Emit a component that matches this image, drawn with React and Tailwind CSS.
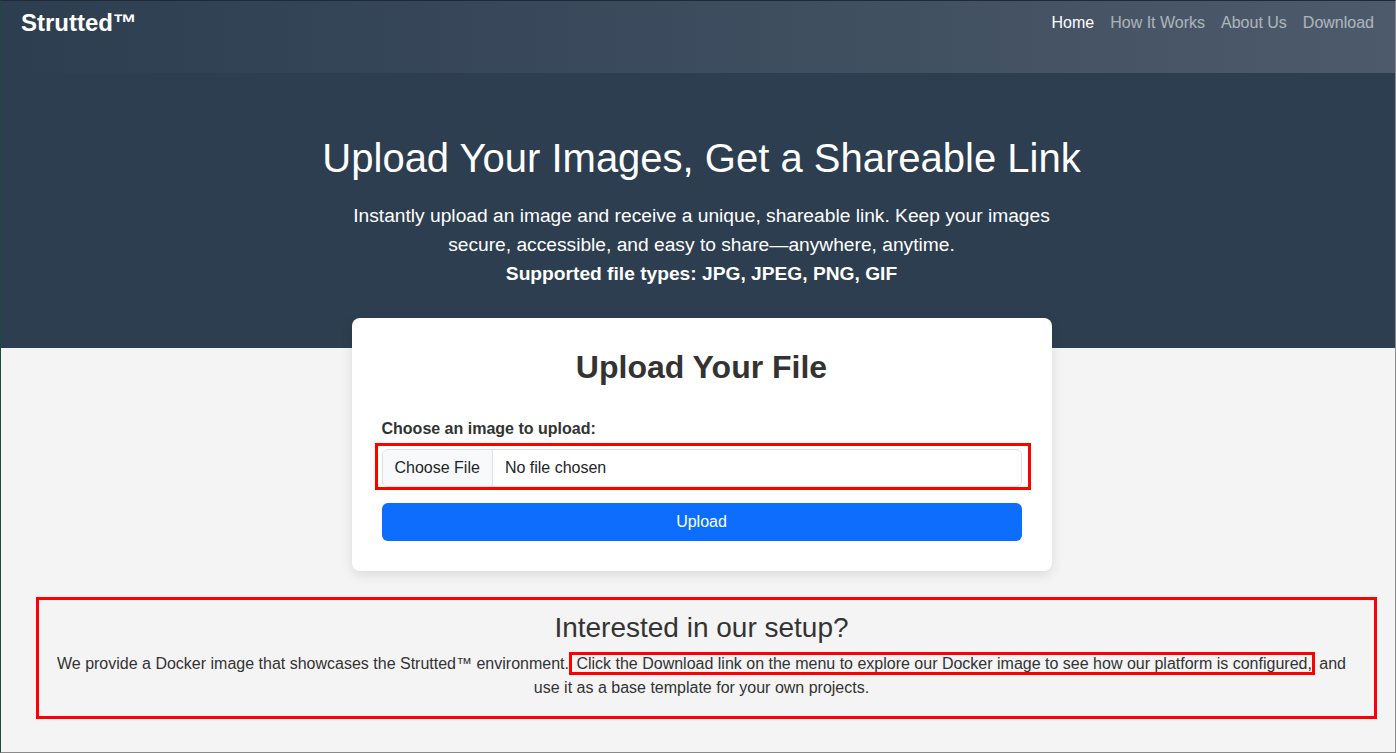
import React from "react";

const navLinks = [
    {label: "Home", active: true},
    {label: "How It Works"},
    {label: "About Us"},
    {label: "Download"},
];

const Header = () => {
    return (
        <header className="h-[72px] bg-gradient-to-r from-[#2c3e50] to-[#4d5a6b]">
            <nav className="flex items-start justify-between pl-[20px] pr-[13px] pt-[5px]">
                <a href="#" className="text-[24px] font-bold leading-[34px] text-white">Strutted™</a>
                <ul className="flex items-center pt-[5px]">
                    {navLinks.map((link) => (
                        <li key={link.label}>
                            <a href="#"
                               className={`block px-2 text-[16px] leading-[24px] ${link.active ? "text-white" : "text-white/55"}`}>
                                {link.label}
                            </a>
                        </li>
                    ))}
                </ul>
            </nav>
        </header>
    );
};

const UploadCard = () => {
    return (
        <div className="relative z-10 mx-auto -mt-[30px] w-[700px] rounded-lg bg-white p-[30px] shadow-[0_4px_12px_rgba(0,0,0,0.1)]">
            <h2 className="mb-[31px] text-center text-[32px] font-bold leading-[38px] text-[#333]">Upload Your File</h2>
            <label className="mb-[8px] block text-[16px] font-bold leading-[24px] text-[#333]">Choose an image to upload:</label>
            <div className="relative">
                <div className="flex h-[38px] overflow-hidden rounded-md border border-[#dee2e6] bg-white text-[16px] text-[#212529]">
                    <span className="flex items-center border-r border-[#dee2e6] bg-[#f8f9fa] px-3">Choose File</span>
                    <span className="flex items-center px-3">No file chosen</span>
                </div>
                {/* annotation outline */}
                <div className="pointer-events-none absolute -left-[7px] -top-[6px] h-[47px] w-[656px] border-[3px] border-[#ff0000]"></div>
            </div>
            <button type="button"
                    className="mt-[16px] h-[38px] w-full rounded-md bg-[#0d6efd] text-[16px] text-white">
                Upload
            </button>
        </div>
    );
};

const SetupInfo = () => {
    return (
        <section className="ml-[35px] mr-[18px] mt-[26px] border-[3px] border-[#ff0000] pb-0 pt-[11px]">
            <div className="ml-[12px] mr-[22px] text-center text-[#333]">
                <h3 className="mb-[7px] text-[28px] leading-[34px]">Interested in our setup?</h3>
                <p className="mb-[16px] text-[16px] leading-[24px]">
                    We provide a Docker image that showcases the Strutted™ environment.<span
                    className="border-[3px] border-[#ff0000]"> Click the Download link on the menu to explore our Docker image to see how our platform is configured,</span> and
                    use it as a base template for your own projects.
                </p>
            </div>
        </section>
    );
};

export default function App() {
    return (
        <div
            className="min-h-[753px] border-b border-l border-r border-t border-b-[#8a8a8a] border-l-[#1d4a3c] border-r-[#8a8a8a] border-t-[#1f2a36] bg-[#f4f4f4] font-['Liberation_Sans',Arial,sans-serif]">
            <Header/>
            <div className="bg-[#2c3e50] pb-[60px] pl-[7px] pt-[61px] text-center text-white">
                <h1 className="text-[40px] leading-[48px]">Upload Your Images, Get a Shareable Link</h1>
                <p className="mx-auto mt-[19px] max-w-[720px] text-[19.2px] leading-[29px]">
                    Instantly upload an image and receive a unique, shareable link. Keep your images secure,
                    accessible, and easy to share—anywhere, anytime.
                    <br/>
                    <strong>Supported file types: JPG, JPEG, PNG, GIF</strong>
                </p>
            </div>
            <div className="pl-[7px]">
                <UploadCard/>
            </div>
            <SetupInfo/>
        </div>
    );
}
